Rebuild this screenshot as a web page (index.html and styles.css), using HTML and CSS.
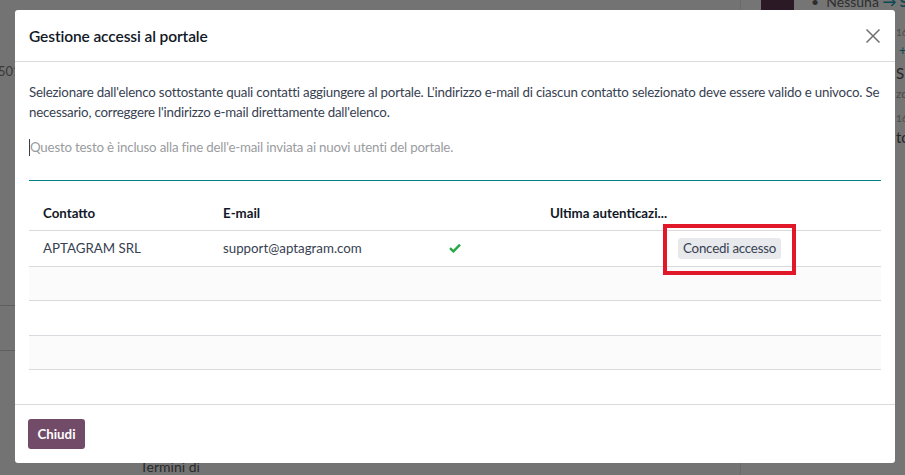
FILE: index.html
```html
<!DOCTYPE html>
<html lang="it">

<head>
     <meta charset="UTF-8" />
     <title>Gestione accessi al portale</title>
     <link rel="stylesheet" href="styles.css">
</head>

<body>

     <div class="backdrop">
          <span class="bg-num">501</span>
          <div class="bg-line bg-line-1"></div>
          <div class="bg-line bg-line-2"></div>
          <span class="bg-terms">Termini di</span>
          <div class="bg-chatter">
               <div class="bg-avatar"></div>
               <div class="bg-msg">• &nbsp;Nessuna <span class="bg-arrow">→ S</span></div>
               <div class="bg-small bg-s1">16</div>
               <div class="bg-plus">+</div>
               <div class="bg-txt bg-t1">SR</div>
               <div class="bg-small bg-t2">zo</div>
               <div class="bg-small bg-s2">16</div>
               <div class="bg-txt bg-t3">to</div>
          </div>
     </div>

     <div class="modal">
          <div class="modal-header">
               <h4>Gestione accessi al portale</h4>
               <span class="close">
                    <svg width="16" height="16" viewBox="0 0 16 16"><path d="M1.5 1.5 L14.5 14.5 M14.5 1.5 L1.5 14.5" stroke="#707070" stroke-width="1.5" fill="none" /></svg>
               </span>
          </div>

          <div class="modal-body">
               <p class="intro">Selezionare dall'elenco sottostante quali contatti aggiungere al portale. L'indirizzo e-mail di ciascun contatto selezionato deve essere valido e univoco. Se<br>necessario, correggere l'indirizzo e-mail direttamente dall'elenco.</p>

               <div class="note">
                    <span class="caret"></span>
                    <span class="placeholder">Questo testo è incluso alla fine dell'e-mail inviata ai nuovi utenti del portale.</span>
               </div>

               <table class="users">
                    <thead>
                         <tr>
                              <th class="c-name">Contatto</th>
                              <th class="c-mail">E-mail</th>
                              <th class="c-ok"></th>
                              <th class="c-login">Ultima autenticazi...</th>
                              <th class="c-act"></th>
                         </tr>
                    </thead>
                    <tbody>
                         <tr>
                              <td>APTAGRAM SRL</td>
                              <td>support@aptagram.com</td>
                              <td class="ok">
                                   <svg width="12" height="10" viewBox="0 0 12 10"><path d="M1 5.2 L4.4 8.4 L11 1.6" stroke="#28a745" stroke-width="2.4" fill="none" /></svg>
                              </td>
                              <td></td>
                              <td class="act"><span class="grant">Concedi accesso</span></td>
                         </tr>
                         <tr class="empty"><td colspan="5"></td></tr>
                         <tr class="empty"><td colspan="5"></td></tr>
                         <tr class="empty"><td colspan="5"></td></tr>
                    </tbody>
               </table>
          </div>

          <div class="modal-footer">
               <button class="btn-close">Chiudi</button>
          </div>
     </div>

</body>

</html>
```

FILE: styles.css
```css
* {
     box-sizing: border-box;
     margin: 0;
     padding: 0;
}

body {
     font-family: 'Lato', 'Open Sans', sans-serif;
     background: #727272;
     color: #374151;
     width: 905px;
     height: 475px;
     overflow: hidden;
     position: relative;
}

/* dimmed page behind the dialog */
.backdrop {
     position: absolute;
     inset: 0;
     background: #737373;
}

.bg-num {
     position: absolute;
     left: -2px;
     top: 63px;
     font-size: 13px;
     color: #3a3a3a;
}

.bg-line {
     position: absolute;
     left: 0;
     width: 15px;
     height: 1px;
     background: #5e5e5e;
}

.bg-line-1 { top: 305px; }
.bg-line-2 { top: 350px; }

.bg-terms {
     position: absolute;
     left: 140px;
     top: 458px;
     font-size: 14px;
     color: #2a2a2a;
}

.bg-chatter {
     position: absolute;
     left: 740px;
     top: 0;
     width: 165px;
     height: 475px;
     background: #757575;
     border-left: 1px solid #6a6a6a;
}

.bg-avatar {
     position: absolute;
     left: 20px;
     top: -10px;
     width: 33px;
     height: 20px;
     background: #2b1a26;
}

.bg-msg {
     position: absolute;
     left: 70px;
     top: -7px;
     font-size: 14px;
     color: #2e2e2e;
     white-space: nowrap;
}

.bg-arrow { color: #0c4a52; font-weight: 700; }

.bg-small {
     position: absolute;
     left: 155px;
     font-size: 10px;
     color: #4a4a4a;
}

.bg-s1 { top: 26px; }
.bg-s2 { top: 112px; }
.bg-t2 { top: 86px; font-size: 12px; }

.bg-plus {
     position: absolute;
     left: 158px;
     top: 42px;
     font-size: 13px;
     color: #0c4a52;
}

.bg-txt {
     position: absolute;
     left: 155px;
     font-size: 15px;
     color: #262626;
}

.bg-t1 { top: 64px; }
.bg-t3 { top: 128px; }

/* dialog */
.modal {
     position: absolute;
     left: 15px;
     top: 10px;
     width: 880px;
     height: 453px;
     background: white;
     border-radius: 3px;
     display: flex;
     flex-direction: column;
}

.modal-header {
     height: 52px;
     padding: 0 14px;
     border-bottom: 1px solid #d8dadd;
     display: flex;
     align-items: center;
     justify-content: space-between;
}

.modal-header h4 {
     font-size: 15.5px;
     font-weight: 600;
     color: #111827;
     letter-spacing: -0.1px;
}

.close {
     display: flex;
     margin-right: 0;
}

.modal-body {
     flex: 1;
     padding: 20px 14px 0;
}

.intro {
     font-size: 13.3px;
     line-height: 20px;
     color: #374151;
     letter-spacing: -0.2px;
     white-space: nowrap;
}

.note {
     margin-top: 15px;
     height: 44px;
     border-bottom: 1px solid #017e84;
     display: flex;
     align-items: flex-start;
}

.caret {
     width: 1px;
     height: 17px;
     background: #374151;
     margin-top: 2px;
}

.placeholder {
     font-size: 13.3px;
     line-height: 20px;
     color: #9a9ca0;
     letter-spacing: -0.2px;
}

.users {
     width: 100%;
     margin-top: 16px;
     border-collapse: collapse;
     table-layout: fixed;
     font-size: 13.3px;
}

.users th {
     text-align: left;
     font-weight: 700;
     color: #111827;
     height: 33px;
     padding: 0 14px;
     white-space: nowrap;
     border-bottom: 1px solid #d8dadd;
}

.users td {
     height: 36px;
     padding: 0 14px;
     color: #374151;
     white-space: nowrap;
     border-bottom: 1px solid #d8dadd;
}

.c-name { width: 180px; }
.c-mail { width: 222px; }
.c-ok { width: 105px; }
.c-login { width: 128px; }

.ok { padding-left: 18px !important; }

.users tr.empty td { height: 34.5px; }

.users tbody tr:nth-child(even) td { background: #fbfbfb; }

.act { position: relative; }

.grant {
     display: inline-block;
     background: #e7e9ed;
     color: #374151;
     border-radius: 3px;
     padding: 2px 5px 3px;
     letter-spacing: -0.2px;
}

/* highlight frame drawn over the button */
.act::after {
     content: "";
     box-sizing: border-box;
     position: absolute;
     left: -1px;
     top: -7px;
     width: 133px;
     height: 51px;
     border: 4px solid #e0182a;
}

.modal-footer {
     height: 59px;
     border-top: 1px solid #d8dadd;
     padding: 0 13px;
     display: flex;
     align-items: center;
}

.btn-close {
     background: #714b67;
     color: white;
     border: none;
     border-radius: 3px;
     font-family: inherit;
     font-weight: 700;
     font-size: 13.3px;
     width: 57px;
     height: 30px;
}
```
